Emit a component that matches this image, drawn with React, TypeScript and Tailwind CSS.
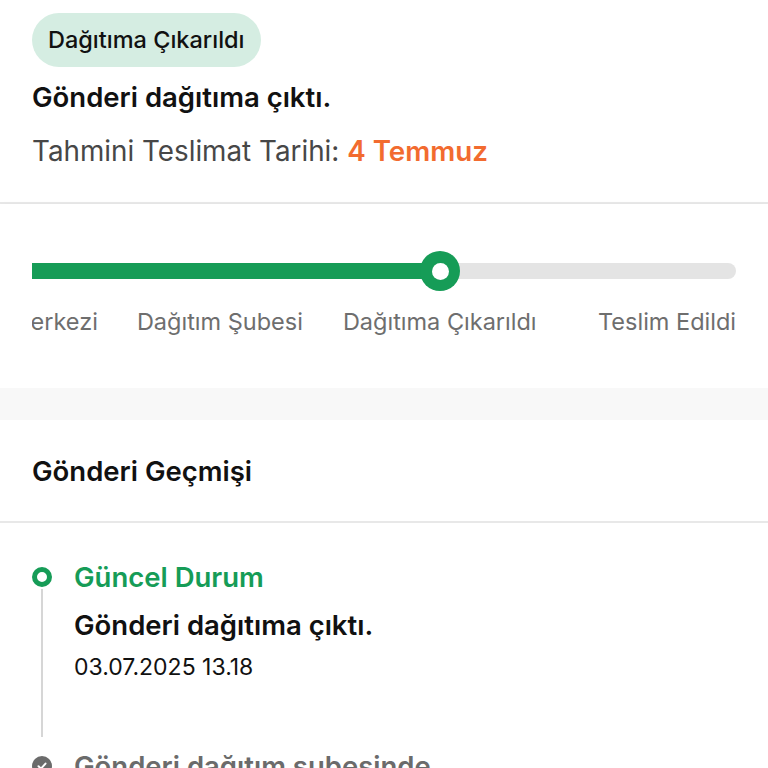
import React from "react";

export default function App() {
  const labels = ["Transfer Merkezi", "Dağıtım Şubesi", "Dağıtıma Çıkarıldı", "Teslim Edildi"];
  return (
    <div className="w-[768px] h-[768px] overflow-hidden bg-white" style={{ fontFamily: "Inter, 'Noto Sans', sans-serif" }}>
      <div className="px-8 pt-[13px] pb-[35px]">
        <div className="inline-flex h-[54px] items-center rounded-full bg-[#d5ede2] px-4 text-[23.5px] font-medium text-[#111]">
          Dağıtıma Çıkarıldı
        </div>
        <div className="mt-[14px] text-[27.5px] font-semibold leading-[32px] text-[#111]">Gönderi dağıtıma çıktı.</div>
        <div className="mt-[22px] text-[27.8px] leading-[32px] text-[#474747]">
          Tahmini Teslimat Tarihi: <span className="font-semibold text-[#f26b2f]">4 Temmuz</span>
        </div>
      </div>
      <div className="h-[2px] bg-[#e8e8e8]" />
      <div className="px-8 pt-[47px] pb-[51px] shadow-[0_2px_6px_rgba(0,0,0,0.06)]">
        <div className="relative h-[40px]">
          <div className="absolute left-0 right-0 top-[12px] h-[16px] rounded-full bg-[#e4e4e4]" />
          <div className="absolute left-0 top-[12px] h-[16px] w-[410px] bg-[#169c57]" />
          <div className="absolute left-[388px] top-0 h-[40px] w-[40px] rounded-full bg-[#169c57] flex items-center justify-center">
            <div className="h-[17px] w-[17px] rounded-full bg-white" />
          </div>
        </div>
        <div className="mt-[16px] flex overflow-hidden text-[23.5px] leading-[30px] text-[#6e6e6e] whitespace-nowrap">
          <span className="ml-[-122px] shrink-0">{labels[0]}</span>
          <span className="ml-[39px] shrink-0">{labels[1]}</span>
          <span className="ml-[40px] shrink-0">{labels[2]}</span>
          <span className="ml-auto shrink-0">{labels[3]}</span>
        </div>
      </div>
      <div className="h-[32px] bg-[#f8f8f8]" />
      <div className="px-8 pt-[35px] pb-[34px] text-[27.5px] font-semibold leading-[32px] text-[#111]">Gönderi Geçmişi</div>
      <div className="h-[2px] bg-[#e8e8e8]" />
      <div className="px-8 pt-[38px]">
        <div className="flex">
          <div className="flex w-[20px] flex-col items-center">
            <div className="mt-[6px] h-[20px] w-[20px] rounded-full border-[5px] border-[#169c57]" />
            <div className="mt-[2px] h-[148px] w-[2px] bg-[#d6d6d6]" />
          </div>
          <div className="ml-[22px]">
            <div className="text-[27.5px] font-semibold leading-[32px] text-[#169c57]">Güncel Durum</div>
            <div className="mt-[16px] text-[27.5px] font-semibold leading-[32px] text-[#111]">Gönderi dağıtıma çıktı.</div>
            <div className="mt-[12px] text-[23px] leading-[28px] text-[#111]">03.07.2025 13.18</div>
          </div>
        </div>
        <div className="mt-[13px] flex items-start">
          <div className="mt-[6px] flex h-[20px] w-[20px] items-center justify-center rounded-full bg-[#6b6b6b]">
            <svg width="12" height="12" viewBox="0 0 12 12" fill="none">
              <path d="M2.5 6.2L5 8.6L9.5 3.6" stroke="white" strokeWidth="2" strokeLinecap="round" strokeLinejoin="round" />
            </svg>
          </div>
          <div className="ml-[22px] text-[27.5px] font-semibold leading-[32px] text-[#6b6b6b]">Gönderi dağıtım şubesinde</div>
        </div>
      </div>
    </div>
  );
}
